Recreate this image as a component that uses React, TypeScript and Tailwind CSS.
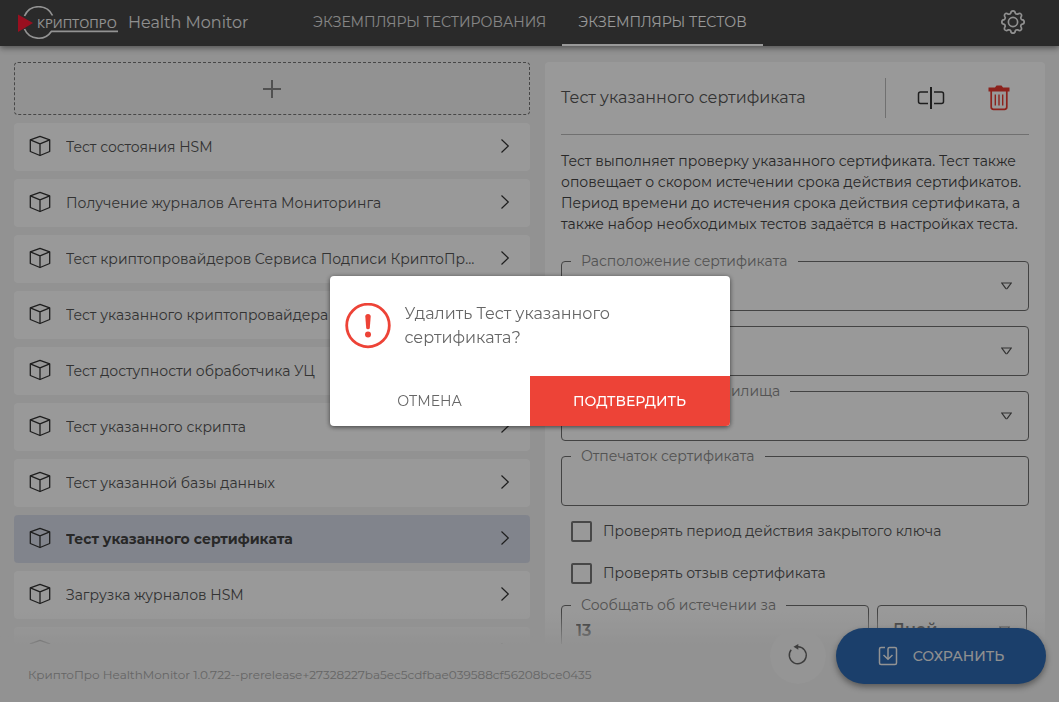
import type { ReactNode } from "react";

const TESTS = [
  "Тест состояния HSM",
  "Получение журналов Агента Мониторинга",
  "Тест криптопровайдеров Сервиса Подписи КриптоПро DSS",
  "Тест указанного криптопровайдера",
  "Тест доступности обработчика УЦ",
  "Тест указанного скрипта",
  "Тест указанной базы данных",
  "Тест указанного сертификата",
  "Загрузка журналов HSM",
  "Тест",
];

const SELECTED = "Тест указанного сертификата";

function Logo() {
  return (
    <svg width="100" height="34" viewBox="0 0 100 34" aria-label="КриптоПро">
      <g fill="none" stroke="#f5f5f5" strokeWidth="1.7">
        <path d="M6.5 10A15.4 15.4 0 0 1 34.5 9.5" />
        <path d="M6.500 23A15.4 15.4 0 0 0 33.500 25.300H100" />
      </g>
      <path d="M0 8.500L15 17L0 26Z" fill="#ff1a35" />
      <text
        x="19"
        y="22"
        fill="#f5f5f5"
        fontFamily="Open Sans, sans-serif"
        fontSize="13"
        fontWeight="400"
      >
        КРИПТОПРО
      </text>
    </svg>
  );
}

function GearIcon() {
  return (
    <svg width="26" height="26" viewBox="0 0 26 26" fill="none" stroke="#f0f0f0" strokeWidth="1.7" strokeLinejoin="round">
      <path d="M10.700 4.200Q11 1.800 13 1.800T15.300 4.200Q15.800 5.300 17.600 5.200Q19.700 3.800 21 5T20.800 8.400Q20.600 10 21.800 10.700Q24.200 11 24.200 13T21.800 15.300Q20.600 16 20.800 17.600Q22.200 19.700 21 21T17.600 20.800Q16 20.600 15.300 21.800Q15 24.200 13 24.200T10.700 21.800Q10 20.600 8.400 20.800Q6.300 22.200 5 21T5.200 17.600Q5.400 16 4.200 15.300Q1.800 15 1.800 13T4.200 10.700Q5.400 10 5.200 8.400Q3.800 6.300 5 5T8.400 5.200Q10 5.400 10.700 4.200Z" />
      <circle cx="13" cy="13" r="4.600" />
    </svg>
  );
}

function CubeIcon() {
  return (
    <svg className="shrink-0" width="22" height="24" viewBox="0 0 22 24" fill="none" stroke="#333" strokeWidth="1.300" strokeLinejoin="round">
      <path d="M11 1.300L20.700 4.900V16.500L11 20.500L1.300 16.500V4.900Z" />
      <path d="M1.300 4.900L11 8.800L20.700 4.900M11 8.800V20.500" />
    </svg>
  );
}

function ChevronIcon() {
  return (
    <svg className="shrink-0" width="10" height="18" viewBox="0 0 10 18" fill="none" stroke="#333" strokeWidth="1.200">
      <path d="M1.500 1.500L8.300 8L1.500 14.500" />
    </svg>
  );
}

function RenameIcon() {
  return (
    <svg width="28" height="24" viewBox="0 0 28 24" fill="none" stroke="#333" strokeWidth="1.500">
      <path d="M11 6H3.500Q1.500 6 1.500 8V15.500Q1.500 17.500 3.500 17.500H11" />
      <path d="M17 6H24.500Q26.500 6 26.500 8V15.500Q26.500 17.500 24.500 17.500H17" />
      <path d="M14 1V23" strokeWidth="2" />
    </svg>
  );
}

function TrashIcon() {
  return (
    <svg width="22" height="26" viewBox="0 0 22 26" fill="none" stroke="#ea3a30">
      <path d="M0.500 2.500H7L8.500 0.500H13.500L15 2.500H21.500V6.500H0.500Z" fill="#ea3a30" stroke="none" />
      <path d="M3.200 6V22Q3.200 24.300 5.500 24.300H16.500Q18.800 24.300 18.800 22V6" strokeWidth="1.700" />
      <path d="M7.300 9.500V20.500M11 9.500V20.500M14.700 9.500V20.500" strokeWidth="1.400" />
    </svg>
  );
}

function ResetIcon() {
  return (
    <svg width="22" height="24" viewBox="0 0 22 24" fill="none" stroke="#666" strokeWidth="1.400">
      <path d="M4.200 5.800A8.500 8.500 0 1 0 11 2.700" />
      <path d="M6.500 2.700L11.300 0V5.800Z" fill="#666" stroke="none" />
    </svg>
  );
}

function SaveIcon() {
  return (
    <svg width="20" height="20" viewBox="0 0 20 20" fill="none" stroke="#f5f5f5" strokeWidth="1.500">
      <path d="M7 1.500H3Q1.500 1.500 1.500 3V17Q1.500 18.500 3 18.500H17Q18.500 18.500 18.500 17V3Q18.500 1.500 17 1.500H11.500Q10 1.500 10 3V13" />
      <path d="M5.500 9L10 13.300L14.500 9" />
    </svg>
  );
}

function Field({ id, label, children }: { id: string; label?: string; children: ReactNode }) {
  return (
    <fieldset className="min-w-0 rounded border border-[#707070]">
      <legend className={label ? "ml-[9px] h-[18px] px-2.5 text-sm leading-[18px] text-[#8a8a8a]" : "h-[18px]"}>
        {label && <label htmlFor={id}>{label}</label>}
      </legend>
      {children}
    </fieldset>
  );
}

function SelectBox({ id, value = "", label }: { id: string; value?: string; label?: string }) {
  return (
    <div className="relative">
      <select
        id={id}
        aria-label={label}
        className="block h-10 w-full appearance-none bg-transparent pb-2 pl-3.5 text-base font-semibold text-[#444] outline-none"
      >
        <option>{value}</option>
      </select>
      <svg className="pointer-events-none absolute top-3 right-4" width="11" height="8" viewBox="0 0 11 8" fill="none" stroke="#555" strokeWidth="1.200">
        <path d="M0.800 1H10.200L6.300 6.300Q5.500 7.200 4.700 6.300Z" />
      </svg>
    </div>
  );
}

function Check({ label }: { label: string }) {
  return (
    <label className="flex h-[42px] items-center gap-[11px] pl-2.5 text-sm text-[#555]">
      <input type="checkbox" className="size-[21px] appearance-none rounded-xs border-2 border-[#777]" />
      {label}
    </label>
  );
}

function Header() {
  return (
    <header className="relative z-10 flex h-[46px] shrink-0 items-center bg-[#464646] shadow-[0_2px_6px_rgba(0,0,0,0.45)]">
      <a href="#" className="flex w-[297px] items-center gap-2.5 pl-[18px] text-base text-[#eee]">
        <Logo />
        Health Monitor
      </a>
      <nav className="flex h-full flex-1 text-sm">
        <a href="#" className="flex items-center border-b-2 border-transparent px-4 text-[#e0e0e0]">
          ЭКЗЕМПЛЯРЫ ТЕСТИРОВАНИЯ
        </a>
        <a href="#" className="flex items-center border-b-2 border-white px-4 text-white">
          ЭКЗЕМПЛЯРЫ ТЕСТОВ
        </a>
      </nav>
      <button aria-label="Настройки" className="mr-[33px] pb-0.5">
        <GearIcon />
      </button>
    </header>
  );
}

function TestList() {
  return (
    <section className="flex min-w-0 flex-col gap-2">
      <button
        aria-label="Добавить"
        className="flex h-[53px] shrink-0 items-center justify-center rounded border border-dashed border-[#777]"
      >
        <svg width="18" height="18" viewBox="0 0 18 18" stroke="#888" strokeWidth="2">
          <path d="M9 0V18M0 9H18" />
        </svg>
      </button>
      {TESTS.map((name) => (
        <button
          key={name}
          className={
            "flex h-12 shrink-0 items-center rounded pr-5 pl-[15px] text-left text-sm " +
            (name === SELECTED ? "bg-[#d8ddea] font-bold text-[#444]" : "bg-white text-[#555]")
          }
        >
          <CubeIcon />
          <span className="ml-[15px] w-[410px] truncate">{name}</span>
          <span className="ml-auto">
            <ChevronIcon />
          </span>
        </button>
      ))}
    </section>
  );
}

function Details() {
  return (
    <section className="min-w-0 rounded bg-white p-4">
      <div className="flex items-center justify-between">
        <h1 className="text-base text-[#555]">{SELECTED}</h1>
        <div className="flex h-10 items-center gap-5 border-l border-[#bbb] pr-1.5 pl-[21px]">
          <button aria-label="Переименовать" className="flex w-12 justify-center">
            <RenameIcon />
          </button>
          <button aria-label="Удалить" className="flex w-12 justify-center">
            <TrashIcon />
          </button>
        </div>
      </div>
      <hr className="mt-4 border-[#bbb]" />
      <p className="mt-4 mb-[17px] text-sm leading-[21px] whitespace-nowrap text-[#444]">
        Тест выполняет проверку указанного сертификата. Тест также
        <br />
        оповещает о скором истечении срока действия сертификатов.
        <br />
        Период времени до истечения срока действия сертификата, а
        <br />
        также набор необходимых тестов задаётся в настройках теста.
      </p>
      <form className="flex flex-col gap-1.5">
        <Field id="location" label="Расположение сертификата">
          <SelectBox id="location" />
        </Field>
        <Field id="provider">
          <SelectBox id="provider" label="Провайдер" />
        </Field>
        <Field id="store" label="Наименование хранилища">
          <SelectBox id="store" />
        </Field>
        <Field id="thumbprint" label="Отпечаток сертификата">
          <input id="thumbprint" type="text" className="block h-10 w-full px-3.5 text-base outline-none" />
        </Field>
        <div className="-mt-1.5 pt-1">
          <Check label="Проверять период действия закрытого ключа" />
          <Check label="Проверять отзыв сертификата" />
        </div>
        <div className="-mt-1 grid grid-cols-[308fr_150fr] gap-2 pr-0.5">
          <Field id="days" label="Сообщать об истечении за">
            <input
              id="days"
              type="text"
              defaultValue="13"
              className="block h-10 w-full px-3.5 pb-2 text-base font-semibold text-[#444] outline-none"
            />
          </Field>
          <Field id="unit">
            <SelectBox id="unit" value="Дней" label="Единица времени" />
          </Field>
        </div>
      </form>
    </section>
  );
}

function Footer() {
  return (
    <footer className="relative z-10 flex h-[58px] shrink-0 items-start justify-between bg-[#f3f3f3] pr-[13px] pl-7">
      <div className="pointer-events-none absolute inset-x-0 bottom-full h-8 bg-linear-to-t from-[#f3f3f3]/90 to-[#f3f3f3]/0" />
      <span className="mt-[21px] text-xs leading-5 text-[#aaa]">
        КриптоПро HealthMonitor 1.0.722--prerelease+27328227ba5ec5cdfbae039588cf56208bce0435
      </span>
      <div className="relative -mt-4 flex gap-2.5">
        <button aria-label="Сбросить" className="flex size-14 items-center justify-center rounded-full bg-[#f8f8f8]">
          <ResetIcon />
        </button>
        <button className="flex h-14 w-[210px] items-center justify-center gap-[15px] rounded-full bg-[#2d69b2] text-sm font-medium text-[#f0f0f0] shadow-[0_3px_6px_rgba(0,0,0,0.4)]">
          <SaveIcon />
          СОХРАНИТЬ
        </button>
      </div>
    </footer>
  );
}

function ConfirmDialog() {
  return (
    <div className="fixed inset-0 z-20 flex items-center justify-center bg-black/40">
      <div
        role="dialog"
        aria-modal="true"
        className="w-[400px] overflow-hidden rounded bg-white shadow-[0_1px_5px_rgba(0,0,0,0.6)]"
      >
        <div className="flex h-[100px] items-center gap-3.5 px-[15px] text-base text-[#666]">
          <svg className="shrink-0" width="46" height="46" viewBox="0 0 46 46">
            <circle cx="23" cy="22.500" r="21.300" fill="none" stroke="#ed4337" strokeWidth="2.800" />
            <path d="M20.300 13.500Q20.300 11 23 11T25.700 13.500L24.800 25Q24.600 26.300 23 26.300T21.200 25Z" fill="#ed4337" />
            <circle cx="23" cy="31.500" r="3" fill="#ed4337" />
          </svg>
          <p>
            Удалить Тест указанного
            <br />
            сертификата?
          </p>
        </div>
        <div className="grid h-[50px] grid-cols-2 text-sm">
          <button className="text-[#666]">ОТМЕНА</button>
          <button className="bg-[#ed4337] font-medium text-white">ПОДТВЕРДИТЬ</button>
        </div>
      </div>
    </div>
  );
}

export default function App() {
  return (
    <div className="flex h-screen flex-col bg-[#f3f3f3] font-['Montserrat','Inter',sans-serif]">
      <Header />
      <main className="grid min-h-0 flex-1 grid-cols-[516fr_500fr] gap-[15px] overflow-hidden px-3.5 pt-4">
        <TestList />
        <Details />
      </main>
      <Footer />
      <ConfirmDialog />
    </div>
  );
}
